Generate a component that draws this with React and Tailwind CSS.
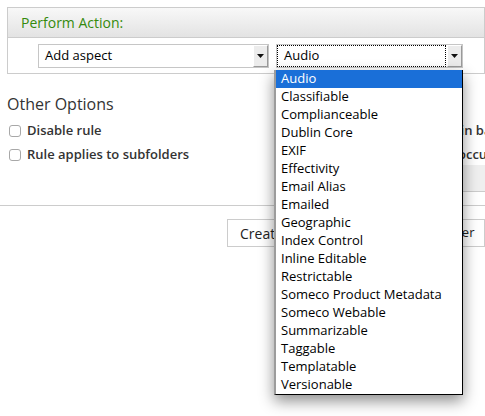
import React from "react";

const items = [
  "Audio",
  "Classifiable",
  "Complianceable",
  "Dublin Core",
  "EXIF",
  "Effectivity",
  "Email Alias",
  "Emailed",
  "Geographic",
  "Index Control",
  "Inline Editable",
  "Restrictable",
  "Someco Product Metadata",
  "Someco Webable",
  "Summarizable",
  "Taggable",
  "Templatable",
  "Versionable",
];

function Arrow() {
  return (
    <div className="w-[15px] h-full flex items-center justify-center bg-[#ececec] border-l border-t border-l-white border-t-white border-r border-b border-r-[#9a9a9a] border-b-[#9a9a9a]">
      <svg width="7" height="4" viewBox="0 0 7 4">
        <polygon points="0,0 7,0 3.5,4" fill="#111" />
      </svg>
    </div>
  );
}

function Checkbox() {
  return <div className="w-[12px] h-[12px] rounded-[3px] border border-[#a8a8a8] bg-white shrink-0" />;
}

export default function App() {
  return (
    <div
      className="w-[485px] h-[416px] relative overflow-hidden bg-white text-[#222]"
      style={{ fontFamily: '"Open Sans", "Noto Sans", sans-serif' }}
    >
      {/* Perform Action panel */}
      <div className="ml-[7px] mt-[7px] w-[478px] border border-[#cccccc]">
        <div className="h-[30px] flex items-center pl-[13px] bg-gradient-to-b from-[#f8f8f8] to-[#e3e3e3] border-b border-[#cccccc]">
          <span className="text-[14px] text-[#348a0c]">Perform Action:</span>
        </div>
        <div className="h-[35px] pt-[6px] pl-[30px] flex gap-[7px]">
          <div className="w-[231px] h-[24px] border border-[#c6c6c6] flex bg-white">
            <div className="flex-1 flex items-center pl-[6px] text-[13px] text-black">Add aspect</div>
            <Arrow />
          </div>
          <div className="w-[187px] h-[24px] border border-[#c6c6c6] flex bg-white">
            <div className="flex-1 flex items-center p-0">
              <div className="w-full h-full flex items-center pl-[6px] text-[13px] text-black border border-dotted border-black mr-[1px]">
                Audio
              </div>
            </div>
            <Arrow />
          </div>
        </div>
      </div>

      {/* Other options */}
      <div className="pl-[7px] mt-[19px]">
        <div className="text-[16px] leading-[22px] text-[#333]">Other Options</div>
        <div className="flex mt-[9px]">
          <div className="w-[379px] shrink-0 flex flex-col gap-[11px] pl-[2px]">
            <div className="flex items-center gap-[6px] h-[13px]">
              <Checkbox />
              <span className="text-[13px] font-semibold text-[#333]">Disable rule</span>
            </div>
            <div className="flex items-center gap-[6px] h-[13px]">
              <Checkbox />
              <span className="text-[13px] font-semibold text-[#333] whitespace-nowrap">Rule applies to subfolders</span>
            </div>
          </div>
          <div className="shrink-0 flex flex-col gap-[11px] whitespace-nowrap">
            <div className="flex items-center gap-[6px] h-[13px]">
              <Checkbox />
              <span className="text-[13px] font-semibold text-[#333]">Run rule in background</span>
            </div>
            <div className="flex items-center gap-[6px] h-[13px]">
              <Checkbox />
              <span className="text-[13px] font-semibold text-[#333]">If errors occur run script</span>
            </div>
          </div>
        </div>
        <div className="ml-[378px] mt-[4px] w-[200px] h-[27px] bg-[#efefef] border-b border-[#cccccc]" />
      </div>

      {/* separator */}
      <div className="mt-[13px] h-px bg-[#cccccc] w-full" />

      {/* buttons */}
      <div className="flex pl-[227px] gap-[5px] mt-[13px] whitespace-nowrap">
        <div className="h-[28px] px-[12px] border border-[#cccccc] flex items-center text-[14px] text-[#222] shrink-0">Create</div>
        <div className="h-[28px] px-[10px] border border-[#cccccc] flex items-center text-[13px] text-[#222] shrink-0">Create and Create Another</div>
      </div>

      {/* dropdown list overlay */}
      <div className="absolute left-[274px] top-[70px] w-[189px] h-[325px] bg-white border-l-2 border-l-[#9c9c9c] border-r border-b border-r-black border-b-black shadow-[0_6px_14px_rgba(0,0,0,0.45)]">
        {items.map((it, i) => (
          <div
            key={it}
            className={
              i === 0
                ? "h-[18px] flex items-center pl-[5px] text-[13px] bg-[#1a6fd8] text-white"
                : "h-[18px] flex items-center pl-[5px] text-[13px] text-black"
            }
          >
            {it}
          </div>
        ))}
      </div>
    </div>
  );
}
